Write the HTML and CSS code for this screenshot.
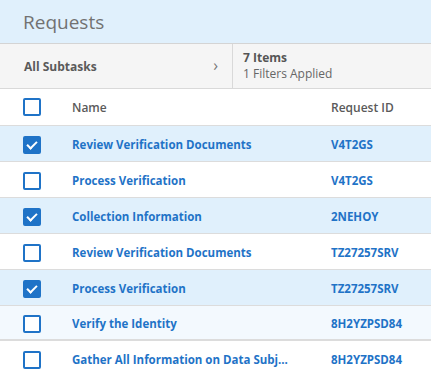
FILE: index.html
```html
<!DOCTYPE html>
<html lang="en">
<head>
    <meta charset="UTF-8">
    <title>Requests</title>
    <link rel="stylesheet" href="styles.css">
</head>
<body>
    <div class="panel">
        <div class="panel-header">
            <h1>Requests</h1>
        </div>

        <!-- Filter bar -->
        <div class="filter-bar">
            <div class="filter-select">
                <span>All Subtasks</span>
                <span class="chevron">&#8250;</span>
            </div>
            <div class="filter-info">
                <div class="item-count">7 Items</div>
                <div class="filter-count">1 Filters Applied</div>
            </div>
        </div>

        <!-- Table -->
        <div class="table">
            <div class="row head">
                <div class="cell-check"><span class="box"></span></div>
                <div class="cell-name">Name</div>
                <div class="cell-id">Request ID</div>
            </div>
            <div class="row selected">
                <div class="cell-check"><span class="box checked"></span></div>
                <div class="cell-name">Review Verification Documents</div>
                <div class="cell-id">V4T2GS</div>
            </div>
            <div class="row">
                <div class="cell-check"><span class="box"></span></div>
                <div class="cell-name">Process Verification</div>
                <div class="cell-id">V4T2GS</div>
            </div>
            <div class="row selected">
                <div class="cell-check"><span class="box checked"></span></div>
                <div class="cell-name">Collection Information</div>
                <div class="cell-id">2NEHOY</div>
            </div>
            <div class="row">
                <div class="cell-check"><span class="box"></span></div>
                <div class="cell-name">Review Verification Documents</div>
                <div class="cell-id">TZ27257SRV</div>
            </div>
            <div class="row selected">
                <div class="cell-check"><span class="box checked"></span></div>
                <div class="cell-name">Process Verification</div>
                <div class="cell-id">TZ27257SRV</div>
            </div>
            <div class="row hover">
                <div class="cell-check"><span class="box"></span></div>
                <div class="cell-name">Verify the Identity</div>
                <div class="cell-id">8H2YZPSD84</div>
            </div>
            <div class="row">
                <div class="cell-check"><span class="box"></span></div>
                <div class="cell-name">Gather All Information on Data Subj...</div>
                <div class="cell-id">8H2YZPSD84</div>
            </div>
        </div>
    </div>
</body>
</html>
```

FILE: styles.css
```css
/* General Styles */
body {
    font-family: 'Open Sans', sans-serif;
    color: #555;
    background-color: #ffffff;
    margin: 0;
    padding: 0;
}
.panel {
    width: 431px;
}
.panel-header {
    height: 44px;
    background-color: #e0f0fc;
    border-bottom: 1px solid #d4d4d4;
    box-sizing: border-box;
    display: flex;
    align-items: center;
    padding-left: 23px;
}
h1 {
    margin: 0;
    font-size: 19px;
    font-weight: 400;
    color: #727272;
}
.filter-bar {
    display: flex;
    height: 45px;
    background-color: #f5f5f5;
    border-bottom: 1px solid #d9d9d9;
    box-sizing: border-box;
}
.filter-select {
    width: 233px;
    box-sizing: border-box;
    display: flex;
    align-items: center;
    justify-content: space-between;
    padding: 0 14px 0 24px;
    border-right: 1px solid #d9d9d9;
    font-size: 12px;
    font-weight: 700;
    color: #5a5a5a;
}
.chevron {
    font-size: 16px;
    font-weight: 400;
    color: #777;
    margin-top: -3px;
}
.filter-info {
    display: flex;
    flex-direction: column;
    justify-content: center;
    padding-left: 10px;
    font-size: 12px;
    line-height: 16px;
    color: #666;
}
.item-count {
    font-weight: 700;
    color: #555;
}
.row {
    display: flex;
    align-items: center;
    height: 36px;
    padding-top: 2px;
    border-bottom: 1px solid #dcdcdc;
    box-sizing: border-box;
    font-size: 11.5px;
    font-weight: 700;
    color: #1f73c7;
}
.row.head {
    height: 37px;
    padding-top: 0;
    color: #5a5a5a;
    font-weight: 600;
    font-size: 12px;
}
.row.selected {
    background-color: #e0f0fc;
}
.row.hover {
    background-color: #f3f9fe;
    border-top: 1px solid #dcdcdc;
    border-bottom-width: 2px;
    margin-top: -1px;
}
.cell-check {
    width: 72px;
    padding-left: 23px;
    box-sizing: border-box;
    display: flex;
}
.box {
    width: 18px;
    height: 18px;
    box-sizing: border-box;
    border: 2px solid #1f73c7;
    border-radius: 2px;
    background: #fff;
    position: relative;
}
.box.checked {
    background: #1f73c7;
}
.box.checked::after {
    content: '';
    position: absolute;
    left: 4px;
    top: 1px;
    width: 4px;
    height: 8px;
    border: solid #fff;
    border-width: 0 2px 2px 0;
    transform: rotate(45deg);
}
.cell-name {
    width: 259px;
    padding-right: 20px;
    box-sizing: border-box;
    white-space: nowrap;
    overflow: hidden;
    text-overflow: ellipsis;
}
.cell-id {
    flex: 1;
}
```
